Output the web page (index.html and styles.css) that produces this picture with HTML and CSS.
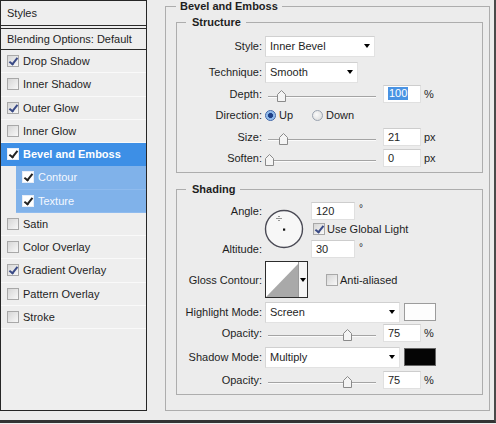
FILE: index.html
```html
<!DOCTYPE html>
<html>
<head>
<meta charset="utf-8">
<link rel="stylesheet" href="styles.css">
</head>
<body>
<div class="frame">
  <div class="styles-panel">
    <div class="sp-head">Styles</div>
    <div class="sp-blend">Blending Options: Default</div>
    <ul class="sp-list">
      <li class="sp-item"><span class="cb on"></span>Drop Shadow</li>
      <li class="sp-item"><span class="cb"></span>Inner Shadow</li>
      <li class="sp-item"><span class="cb on"></span>Outer Glow</li>
      <li class="sp-item"><span class="cb"></span>Inner Glow</li>
      <li class="sp-item active"><span class="cb on"></span>Bevel and Emboss</li>
      <li class="sp-item sub"><span class="cb on"></span>Contour</li>
      <li class="sp-item sub"><span class="cb on"></span>Texture</li>
      <li class="sp-item"><span class="cb"></span>Satin</li>
      <li class="sp-item"><span class="cb"></span>Color Overlay</li>
      <li class="sp-item"><span class="cb on"></span>Gradient Overlay</li>
      <li class="sp-item"><span class="cb"></span>Pattern Overlay</li>
      <li class="sp-item"><span class="cb"></span>Stroke</li>
    </ul>
  </div>

  <fieldset class="outer">
    <legend class="outer-legend">Bevel and Emboss</legend>

    <fieldset class="group structure">
      <legend class="group-legend">Structure</legend>

      <div class="row r-style">
        <span class="lbl">Style:</span>
        <div class="select w-style"><span class="sel-text">Inner Bevel</span><span class="arrow"></span></div>
      </div>
      <div class="row r-tech">
        <span class="lbl">Technique:</span>
        <div class="select w-tech"><span class="sel-text">Smooth</span><span class="arrow"></span></div>
      </div>
      <div class="row r-slide">
        <span class="lbl">Depth:</span>
        <div class="slider"><span class="track"></span>
          <svg class="thumb" style="left:12px" width="9" height="12" viewBox="0 0 9 12"><path d="M0.5 4.5 L4.5 0.5 L8.5 4.5 V11.5 H0.5 Z" fill="#f4f4f4" stroke="#8a8a8a"/></svg>
        </div>
        <div class="field"><span class="selected">100</span></div>
        <span class="unit">%</span>
      </div>
      <div class="row r-dir">
        <span class="lbl">Direction:</span>
        <span class="radio on"></span><span class="rtext">Up</span>
        <span class="radio down"></span><span class="rtext">Down</span>
      </div>
      <div class="row r-slide">
        <span class="lbl">Size:</span>
        <div class="slider"><span class="track"></span>
          <svg class="thumb" style="left:14px" width="9" height="12" viewBox="0 0 9 12"><path d="M0.5 4.5 L4.5 0.5 L8.5 4.5 V11.5 H0.5 Z" fill="#f4f4f4" stroke="#8a8a8a"/></svg>
        </div>
        <div class="field">21</div>
        <span class="unit">px</span>
      </div>
      <div class="row r-slide">
        <span class="lbl">Soften:</span>
        <div class="slider"><span class="track"></span>
          <svg class="thumb" style="left:0px" width="9" height="12" viewBox="0 0 9 12"><path d="M0.5 4.5 L4.5 0.5 L8.5 4.5 V11.5 H0.5 Z" fill="#f4f4f4" stroke="#8a8a8a"/></svg>
        </div>
        <div class="field">0</div>
        <span class="unit">px</span>
      </div>
    </fieldset>

    <fieldset class="group shading">
      <legend class="group-legend">Shading</legend>

      <div class="angle-block">
        <span class="lbl a-lbl1">Angle:</span>
        <span class="lbl a-lbl3">Altitude:</span>
        <svg class="dial" width="41" height="41" viewBox="0 0 41 41">
          <circle cx="20" cy="20" r="18.5" fill="#f7f7f7" stroke="#4a4a55" stroke-width="1.4"/>
          <rect x="19" y="19.5" width="2.2" height="2.2" fill="#111"/>
          <rect x="14.5" y="7" width="1" height="1" fill="#333"/>
          <rect x="14.5" y="11" width="1" height="1" fill="#333"/>
          <rect x="12.5" y="9" width="1" height="1" fill="#333"/>
          <rect x="16.5" y="9" width="1" height="1" fill="#333"/>
          <rect x="14.5" y="9" width="1" height="1" fill="#333"/>
        </svg>
        <div class="a-in1"><div class="field w-deg">120</div><span class="deg">°</span></div>
        <div class="a-in2"><span class="cb on"></span><span class="cbtext">Use Global Light</span></div>
        <div class="a-in3"><div class="field w-deg">30</div><span class="deg">°</span></div>
      </div>

      <div class="row r-gloss">
        <span class="lbl">Gloss Contour:</span>
        <div class="contour">
          <svg class="curve" width="32" height="35" viewBox="0 0 32 35"><rect width="32" height="35" fill="#fff"/><path d="M0 35 L32 2 L32 35 Z" fill="#a9a9a9"/></svg>
          <span class="contour-btn"><span class="arrow"></span></span>
        </div>
        <span class="cb aa"></span><span class="cbtext">Anti-aliased</span>
      </div>

      <div class="row r-mode">
        <span class="lbl">Highlight Mode:</span>
        <div class="select w-mode"><span class="sel-text">Screen</span><span class="arrow"></span></div>
        <span class="swatch white"></span>
      </div>
      <div class="row r-op">
        <span class="lbl">Opacity:</span>
        <div class="slider"><span class="track"></span>
          <svg class="thumb" style="left:78px" width="9" height="12" viewBox="0 0 9 12"><path d="M0.5 4.5 L4.5 0.5 L8.5 4.5 V11.5 H0.5 Z" fill="#f4f4f4" stroke="#8a8a8a"/></svg>
        </div>
        <div class="field">75</div>
        <span class="unit">%</span>
      </div>
      <div class="row r-mode r-mode2">
        <span class="lbl">Shadow Mode:</span>
        <div class="select w-mode"><span class="sel-text">Multiply</span><span class="arrow"></span></div>
        <span class="swatch black"></span>
      </div>
      <div class="row r-op r-op2">
        <span class="lbl">Opacity:</span>
        <div class="slider"><span class="track"></span>
          <svg class="thumb" style="left:78px" width="9" height="12" viewBox="0 0 9 12"><path d="M0.5 4.5 L4.5 0.5 L8.5 4.5 V11.5 H0.5 Z" fill="#f4f4f4" stroke="#8a8a8a"/></svg>
        </div>
        <div class="field">75</div>
        <span class="unit">%</span>
      </div>
    </fieldset>
  </fieldset>
</div>
</body>
</html>
```

FILE: styles.css
```css
* { box-sizing: border-box; }
html, body {
  margin: 0;
  padding: 0;
  background: #ececec;
  font-family: "Liberation Sans", Arial, sans-serif;
  font-size: 11px;
  color: #1e1e1e;
}
.frame {
  width: 496px;
  height: 423px;
  border-right: 2px solid #4a4a4a;
  border-bottom: 3px solid #333;
  display: flex;
  align-items: flex-start;
  background: #ececec;
}

/* ---------- left styles list ---------- */
.styles-panel {
  width: 147px;
  height: 411px;
  border: 1px solid #262626;
  background: #eeeeee;
  flex: none;
}
.sp-head {
  height: 25px;
  line-height: 24px;
  padding-left: 6px;
  border-bottom: 1px solid #2a2a2a;
}
.sp-blend {
  margin-top: 2px;
  height: 22px;
  line-height: 20px;
  padding-left: 6px;
  border-top: 1px solid #2a2a2a;
  border-bottom: 1px solid #2a2a2a;
}
.sp-list {
  list-style: none;
  margin: 0;
  padding: 0;
}
.sp-item {
  height: 23.25px;
  display: flex;
  align-items: center;
  padding-left: 6px;
  border-bottom: 1px solid #f9f9f9;
  gap: 4px;
}
.sp-item.active {
  background: #3d8fe6;
  color: #fff;
  font-weight: bold;
  border-bottom-color: #3d8fe6;
}
.sp-item.sub {
  margin-left: 15px;
  padding-left: 6px;
  background: #80b2ea;
  color: #f4f8ff;
  border-bottom-color: #8fbbee;
}
.sp-item.active .cb, .sp-item.sub .cb {
  background: #fff;
  border-color: #e8eef8;
}
.sp-item.active .cb.on::after, .sp-item.sub .cb.on::after {
  border-color: #222;
}

/* ---------- checkbox / radio ---------- */
.cb {
  position: relative;
  flex: none;
  width: 12px;
  height: 12px;
  border: 1px solid #a8a8a8;
  background: linear-gradient(135deg, #d6d6d6, #f8f8f8);
}
.cb.on::after {
  content: "";
  position: absolute;
  left: 3px;
  top: 0px;
  width: 3px;
  height: 7px;
  border: solid #3a4a86;
  border-width: 0 2px 2px 0;
  transform: rotate(38deg);
}
.radio {
  flex: none;
  width: 11px;
  height: 11px;
  border-radius: 50%;
  border: 1px solid #9aa3b0;
  background: radial-gradient(circle at 40% 40%, #fafafa, #d7d7d7);
}
.radio.on {
  border-color: #3a63a8;
  background: radial-gradient(circle, #1d3f86 0 2.2px, #7fb0e8 2.8px, #c9def5 100%);
}
.rtext { margin-left: 3px; }
.radio.down { margin-left: 19px; }

/* ---------- fieldsets ---------- */
.outer {
  margin: 0 0 0 18px;
  width: 325px;
  height: 411px;
  padding: 3px 6px 0 10px;
  border: 1px solid #adadad;
  min-width: 0;
}
.outer-legend {
  padding: 0 4px;
  font-weight: bold;
  line-height: 13px;
}
.group {
  margin: 0;
  width: 307px;
  padding: 6px 1px 4px 1px;
  border: 1px solid #adadad;
  min-width: 0;
}
.group-legend {
  margin-left: 8px;
  padding: 0 5px 0 6px;
  font-weight: bold;
  line-height: 13px;
}
.shading {
  margin-top: 10px;
  padding-top: 5px;
}

/* ---------- rows ---------- */
.row {
  display: flex;
  align-items: center;
  height: 21px;
}
.lbl {
  width: 84px;
  text-align: right;
  flex: none;
  margin-right: 3px;
  white-space: nowrap;
}
.r-style { height: 22px; }
.r-tech { height: 22px; margin-top: 4px; }
.r-dir { height: 22px; }

.select {
  height: 21px;
  background: #fff;
  border: 1px solid #e2e2e2;
  border-top-color: #d0d0d0;
  border-left-color: #d6d6d6;
  display: flex;
  align-items: center;
  padding-left: 4px;
  flex: none;
}
.w-style { width: 110px; }
.w-tech { width: 93px; }
.w-mode { width: 135px; }
.arrow {
  margin-left: auto;
  margin-right: 4px;
  width: 0;
  height: 0;
  border-left: 3.5px solid transparent;
  border-right: 3.5px solid transparent;
  border-top: 4px solid #000;
}

.slider {
  position: relative;
  width: 113px;
  height: 100%;
  margin-right: 5px;
  flex: none;
}
.track {
  position: absolute;
  left: 3px;
  right: 2px;
  top: 60%;
  height: 2px;
  border-top: 1px solid #a4a4a4;
  border-bottom: 1px solid #fbfbfb;
}
.thumb {
  position: absolute;
  top: 50%;
  margin-top: -4px;
}

.field {
  width: 38px;
  height: 18px;
  background: #fff;
  border: 1px solid #e0e0e0;
  border-top-color: #cdcdcd;
  display: flex;
  align-items: center;
  padding-left: 4px;
  flex: none;
}
.selected {
  background: #4a93e3;
  color: #fff;
  padding: 0 1px;
  line-height: 13px;
}
.unit { margin-left: 3px; }

/* ---------- shading ---------- */
.angle-block {
  display: grid;
  grid-template-columns: 84px 43px auto;
  grid-template-rows: 19px 18px 22px;
  column-gap: 3px;
  align-items: center;
}
.angle-block .lbl { margin-right: 0; }
.a-lbl1 { grid-column: 1; grid-row: 1; }
.a-lbl3 { grid-column: 1; grid-row: 3; }
.dial {
  grid-column: 2;
  grid-row: 1 / 4;
  align-self: start;
  margin-top: 8px;
  margin-left: -1px;
}
.a-in1, .a-in2, .a-in3 {
  grid-column: 3;
  display: flex;
  align-items: center;
}
.a-in1 { grid-row: 1; }
.a-in2 { grid-row: 2; padding-left: 2px; }
.a-in3 { grid-row: 3; }
.w-deg { width: 44px; }
.deg { margin-left: 4px; margin-top: -4px; font-size: 10px; }
.cbtext { margin-left: 2px; }

.r-gloss { height: 39px; }
.contour {
  display: flex;
  width: 43px;
  height: 37px;
  border: 1px solid #2c2c2c;
  background: #fff;
  flex: none;
}
.curve { display: block; }
.contour-btn {
  flex: 1;
  border-left: 1px solid #9a9a9a;
  background: #f6f6f6;
  display: flex;
  align-items: center;
  justify-content: center;
}
.contour-btn .arrow { margin: 0; }
.cb.aa { margin-left: 18px; }

.r-mode { height: 22px; margin-top: 2px; }
.r-mode2 { margin-top: 3px; }
.r-op { height: 20px; }
.r-op2 { margin-top: 2px; }
.swatch {
  width: 32px;
  height: 18px;
  margin-left: 4px;
  border: 1px solid #9c9c9c;
  flex: none;
}
.swatch.white { background: #fdfdfd; }
.swatch.black { background: #050505; border-color: #666; }
```
